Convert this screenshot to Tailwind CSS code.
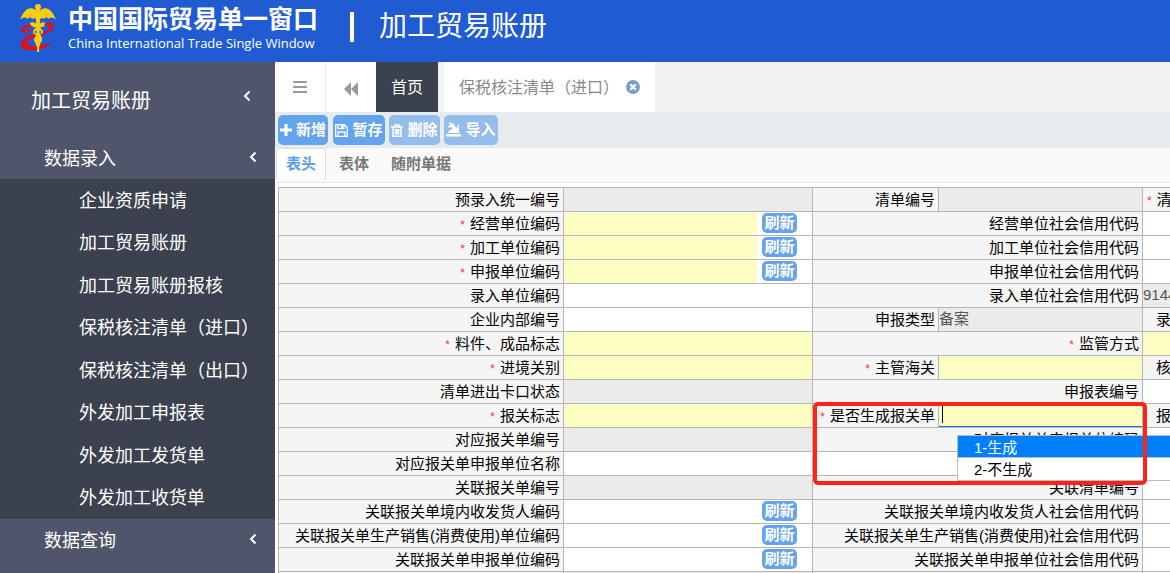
<!DOCTYPE html>
<html lang="zh-CN">
<head>
<meta charset="utf-8">
<meta name="viewport" content="width=device-width, initial-scale=1">
<title>加工贸易账册</title>
<script src="https://cdn.jsdelivr.net/npm/@tailwindcss/browser@4"></script>
</head>
<body class="flex h-screen flex-col overflow-hidden bg-white font-['Liberation_Sans','Noto_Sans_CJK_SC',sans-serif] text-[15px]">

<header class="flex h-[62px] shrink-0 items-start bg-[#205bd2] text-white">
  <svg class="ml-[18px] mt-[2px] h-[52px] w-[40px] shrink-0" viewBox="0 0 40 52" aria-hidden="true">
    <path d="M15 22C6 22 1 27 4 30C7 32 13 30 16 28C10 29 6 29 7 27C9 25 12 25 16 25Z" fill="#e40d18"/>
    <path d="M17.500 8C12 4 6 7 2 18C5 15 8 15 9 17C11 15 13 15 14 17C15 16 17 16 18 17V22H22V17C23 16 25 16 26 17C27 15 29 15 31 17C32 15 35 15 38 18C34 7 28 4 22.500 8Z" fill="#f7cd12"/>
    <circle cx="20" cy="5" r="3" fill="#f7cd12"/>
    <path d="M18 7H22L21 50H19Z" fill="#f7cd12"/>
    <path d="M12 21C15 19 18 21 20 23C22 21 25 19 28 21C28 24 24 25 22 26C26 28 26 32 22 34C25 36 24 40 21.500 41C23 43 22 44 21 45H19C18 44 17 43 18.500 41C16 40 15 36 18 34C14 32 14 28 18 26C16 25 12 24 12 21Z" fill="#f7cd12"/>
    <path d="M17 30H18.500M21.500 30H23M17.500 38H18.500M21.500 38H22.500" stroke="#205bd2" stroke-width="2"/>
    <path d="M27 21C35 19 38 23 34 28C29 33 14 35 10 39C8 42 10 44 15 44C23 44 29 42 34 40C29 46 20 49 10 48C2 47 1 41 6 37C9 34 13 33 17 32L18 34L23 32C26 31 30 28 31 26C32 23 30 23 26 23Z" fill="#e40d18"/>
    <path d="M19 31H21.500L23 34C25 37 24 40 21.500 42L21 50H19.500L18.500 42C16 40 16 36 18 34Z" fill="#f7cd12"/>
  </svg>
  <div class="ml-[10px] mt-[4px] shrink-0">
    <div class="text-[25px] leading-[30px] font-bold">中国国际贸易单一窗口</div>
    <div class="font-['Open_Sans',sans-serif] text-[13px] leading-[18px]">China International Trade Single Window</div>
  </div>
  <div class="ml-[32px] mt-[12px] h-[30px] w-[4px] shrink-0 bg-white"></div>
  <h1 class="ml-[25px] mt-[7px] text-[28px] leading-[40px] whitespace-nowrap">加工贸易账册</h1>
</header>

<div class="flex min-h-0 flex-1">
  <nav class="w-[275px] shrink-0 overflow-hidden bg-[#4f566b] text-[18px] text-white">
    <a href="#" class="flex h-[76px] items-center justify-between pt-[2px] pl-[31px] pr-[24px] text-[20px]">加工贸易账册
      <svg class="mb-[11px] h-[12px] w-[8px]" viewBox="0 0 8 12" fill="none" stroke="currentColor" stroke-width="2"><path d="M6.500 1.500L2 6L6.500 10.500"/></svg></a>
    <a href="#" class="flex h-[41px] items-center justify-between pt-[2px] pl-[44px] pr-[18px]">数据录入
      <svg class="mb-[6px] h-[12px] w-[8px]" viewBox="0 0 8 12" fill="none" stroke="currentColor" stroke-width="2"><path d="M6.500 1.500L2 6L6.500 10.500"/></svg></a>
    <ul class="flex h-[340px] flex-col bg-[#3b414e] [&>li]:flex [&>li]:flex-1 [&>li]:items-center [&>li]:pt-[2px] [&>li]:pl-[79px] [&>li]:whitespace-nowrap">
      <li><a href="#">企业资质申请</a></li>
      <li><a href="#">加工贸易账册</a></li>
      <li><a href="#">加工贸易账册报核</a></li>
      <li><a href="#">保税核注清单（进口）</a></li>
      <li><a href="#">保税核注清单（出口）</a></li>
      <li><a href="#">外发加工申报表</a></li>
      <li><a href="#">外发加工发货单</a></li>
      <li><a href="#">外发加工收货单</a></li>
    </ul>
    <a href="#" class="flex h-[43px] items-center justify-between pt-[2px] pl-[44px] pr-[18px]">数据查询
      <svg class="mb-[6px] h-[12px] w-[8px]" viewBox="0 0 8 12" fill="none" stroke="currentColor" stroke-width="2"><path d="M6.500 1.500L2 6L6.500 10.500"/></svg></a>
  </nav>

  <main class="min-w-0 flex-1 overflow-hidden">
    <div class="flex h-[50px] bg-[#f0f2f4] text-[16px] text-[#888]">
      <button aria-label="菜单" class="flex w-[51px] items-center justify-center border-r border-[#f0f0f0] bg-white">
        <svg class="h-[12px] w-[14px]" viewBox="0 0 14 12" fill="#999"><path d="M0 0H14V2H0ZM0 5H14V7H0ZM0 10H14V12H0Z"/></svg></button>
      <button aria-label="向左" class="flex w-[50px] items-center justify-center bg-white">
        <svg class="mt-[3px] h-[14px] w-[16px]" viewBox="0 0 16 14" fill="#999"><path d="M8 0V14L1 7ZM15 0V14L8 7Z"/></svg></button>
      <button class="w-[62px] bg-[#3b414e] pt-[2px] text-white">首页</button>
      <div class="ml-[6px] flex w-[211px] items-center bg-white pl-[15px] whitespace-nowrap">
        <a href="#" class="pt-[2px]">保税核注清单（进口）</a>
        <button aria-label="关闭" class="ml-[7px] flex size-[14px] shrink-0 items-center justify-center rounded-full bg-[#7d9fd0]">
          <svg class="size-[6px]" viewBox="0 0 6 6" stroke="#fff" stroke-width="2"><path d="M0 0L6 6M6 0L0 6"/></svg></button>
      </div>
    </div>

    <div class="flex h-[36px] items-start bg-[#e7ebee] pl-[3px] pt-[3px] text-[15px] font-bold text-white [&>button]:flex [&>button]:h-[30px] [&>button]:items-center [&>button]:justify-center [&>button]:gap-[4px] [&>button]:rounded-[5px] [&>button]:whitespace-nowrap">
      <button class="w-[50px] bg-[#64a3ed]"><svg class="size-[12px] shrink-0" viewBox="0 0 12 12" fill="#fff"><path d="M4.500 0H7.500V4.500H12V7.500H7.500V12H4.500V7.500H0V4.500H4.500Z"/></svg>新增</button>
      <button class="ml-[5px] w-[52px] bg-[#64a3ed]"><svg class="size-[13px] shrink-0" viewBox="0 0 13 13" fill="none" stroke="#fff" stroke-width="1.300"><path d="M.7.700H9.500L12.300 3.500V12.300H.7ZM3 .7V4.500H9V.7M3 12V8H10V12"/><path d="M7 1V4" stroke-width="2"/></svg>暂存</button>
      <button class="ml-[4px] w-[51px] bg-[#94bdeb]"><svg class="h-[13px] w-[12px] shrink-0" viewBox="0 0 12 13" fill="none" stroke="#fff" stroke-width="1.500"><path d="M0 3H12M4 3V1H8V3M2 3V12.200H10V3M4.500 5V10.500M6 5V10.500M7.600 5V10.500"/></svg>删除</button>
      <button class="ml-[4px] w-[54px] bg-[#94bdeb]"><svg class="mb-[2px] h-[15px] w-[15px] shrink-0" viewBox="0 0 15 15" fill="#fff"><path d="M0 12H15V14.500H0ZM2 11C3 8 5 7 7 7L5 5L3 6L2 4L4 3L3 1L5 0L6 2L8 1L8 3L11 6L13 1V10L14 11Z"/></svg>导入</button>
    </div>

    <div class="flex h-[35px] items-start border-b border-[#e7e9ea] bg-[#fafafa] pl-[1px] font-bold text-[#777]" role="tablist">
      <button role="tab" aria-selected="true" class="h-[31px] w-[50px] rounded-t-[4px] border border-b-0 border-[#ddd] bg-white text-[#5c9de9]">表头</button>
      <button role="tab" class="ml-[13px] h-[31px] pt-px">表体</button>
      <button role="tab" class="ml-[22px] h-[31px] pt-px">随附单据</button>
    </div>

    <form class="pl-[3px] pt-[4px]">
      <table class="w-[calc(100%+12px)] table-fixed border-collapse text-black [&_td]:border [&_td]:border-[#b5b5b5] [&_td]:p-0 [&_th]:border [&_th]:border-[#b5b5b5] [&_th]:bg-[#f5f5f5] [&_th]:p-0 [&_th]:pr-[3px] [&_th]:text-right [&_th]:font-normal [&_th]:whitespace-nowrap [&_tr]:h-[24px] [&_label]:block [&_label]:h-[23px] [&_label]:leading-[23px] [&_input]:block [&_input]:h-[22px] [&_input]:w-full [&_input]:text-[#555] [&_input]:outline-none [&_i]:mr-[5px] [&_i]:text-[12px] [&_i]:text-[#f33] [&_i]:not-italic [&_td>div>button]:ml-[5px] [&_td>div>button]:h-[20px] [&_td>div>button]:w-[35px] [&_td>div>button]:shrink-0 [&_td>div>button]:rounded-[5px] [&_td>div>button]:bg-[#64a3ed] [&_td>div>button]:text-[15px] [&_td>div>button]:leading-[20px] [&_td>div>button]:font-bold [&_td>div>button]:text-white">
        <colgroup><col class="w-[285px]"><col class="w-[249px]"><col class="w-[126px]"><col class="w-[204px]"><col></colgroup>
        <tbody>
        <tr><th><label for="a1">预录入统一编号</label></th><td class="bg-[#ebebeb]"><input id="a1" readonly></td><th><label for="b1">清单编号</label></th><td class="bg-[#ebebeb]"><input id="b1" readonly></td><th><label class="pl-[4px] text-left"><i>*</i>清</label></th></tr>
        <tr><th><label for="a2"><i>*</i>经营单位编码</label></th><td><div class="flex h-[23px] items-start pt-px pr-[15px]"><input id="a2" class="bg-[#fbfec0]"><button type="button">刷新</button></div></td><th colspan="2"><label for="b2">经营单位社会信用代码</label></th><td><input id="b2"></td></tr>
        <tr><th><label for="a3"><i>*</i>加工单位编码</label></th><td><div class="flex h-[23px] items-start pt-px pr-[15px]"><input id="a3" class="bg-[#fbfec0]"><button type="button">刷新</button></div></td><th colspan="2"><label for="b3">加工单位社会信用代码</label></th><td><input id="b3"></td></tr>
        <tr><th><label for="a4"><i>*</i>申报单位编码</label></th><td><div class="flex h-[23px] items-start pt-px pr-[15px]"><input id="a4" class="bg-[#fbfec0]"><button type="button">刷新</button></div></td><th colspan="2"><label for="b4">申报单位社会信用代码</label></th><td><input id="b4"></td></tr>
        <tr><th><label for="a5">录入单位编码</label></th><td><input id="a5"></td><th colspan="2"><label for="b5">录入单位社会信用代码</label></th><td class="bg-[#ebebeb]"><input id="b5" value="9144" readonly></td></tr>
        <tr><th><label for="a6">企业内部编号</label></th><td><input id="a6"></td><th><label for="b6">申报类型</label></th><td class="bg-[#ebebeb]"><input id="b6" value="备案" readonly></td><th><label class="pl-[13px] text-left">录</label></th></tr>
        <tr><th><label for="a7"><i>*</i>料件、成品标志</label></th><td class="bg-[#fbfec0]"><input id="a7"></td><th colspan="2"><label for="b7"><i>*</i>监管方式</label></th><td class="bg-[#fbfec0]"><input id="b7"></td></tr>
        <tr><th><label for="a8"><i>*</i>进境关别</label></th><td class="bg-[#fbfec0]"><input id="a8"></td><th><label for="b8"><i>*</i>主管海关</label></th><td class="bg-[#fbfec0]"><input id="b8"></td><th><label class="pl-[13px] text-left">核</label></th></tr>
        <tr><th><label for="a9">清单进出卡口状态</label></th><td class="bg-[#ebebeb]"><input id="a9" readonly></td><th colspan="2"><label for="b9">申报表编号</label></th><td><input id="b9"></td></tr>
        <tr><th><label for="a10"><i>*</i>报关标志</label></th><td class="bg-[#fbfec0]"><input id="a10"></td>
          <th><label for="b10"><i>*</i>是否生成报关单</label></th>
          <td class="bg-[#fbfec0]">
            <div class="relative h-[23px]">
              <input id="b10" role="combobox" aria-expanded="true" aria-controls="opts" class="h-[23px]! border-b border-[#0b7be8]">
              <span class="absolute left-[3px] top-[2px] h-[17px] w-px bg-black"></span>
              <ul id="opts" role="listbox" class="absolute left-[18px] top-[31px] z-10 w-[260px] border border-[#bbb] bg-white text-black [&>li]:h-[22px] [&>li]:pl-[16px] [&>li]:leading-[23px]">
                <li role="option" aria-selected="true" class="border-b border-[#bbb] bg-[#0080ff] text-white">1-生成</li>
                <li role="option" aria-selected="false">2-不生成</li>
              </ul>
              <div class="pointer-events-none absolute -left-[126px] -top-[2px] z-20 h-[83px] w-[334px] rounded-[5px] border-4 border-[#ff2317]"></div>
            </div>
          </td><th><label class="pl-[13px] text-left">报</label></th></tr>
        <tr><th><label for="a11">对应报关单编号</label></th><td class="bg-[#ebebeb]"><input id="a11" readonly></td><th colspan="2"><label for="b11">对应报关单申报单位编码</label></th><td><input id="b11"></td></tr>
        <tr><th><label for="a12">对应报关单申报单位名称</label></th><td><input id="a12"></td><td colspan="3"></td></tr>
        <tr><th><label for="a13">关联报关单编号</label></th><td class="bg-[#ebebeb]"><input id="a13" readonly></td><th colspan="2"><label for="b13">关联清单编号</label></th><td><input id="b13"></td></tr>
        <tr><th><label for="a14">关联报关单境内收发货人编码</label></th><td><div class="flex h-[23px] items-start pt-px pr-[15px]"><input id="a14"><button type="button">刷新</button></div></td><th colspan="2"><label for="b14">关联报关单境内收发货人社会信用代码</label></th><td><input id="b14"></td></tr>
        <tr><th><label for="a15">关联报关单生产销售(消费使用)单位编码</label></th><td><div class="flex h-[23px] items-start pt-px pr-[15px]"><input id="a15"><button type="button">刷新</button></div></td><th colspan="2"><label for="b15">关联报关单生产销售(消费使用)社会信用代码</label></th><td><input id="b15"></td></tr>
        <tr><th><label for="a16">关联报关单申报单位编码</label></th><td><div class="flex h-[23px] items-start pt-px pr-[15px]"><input id="a16"><button type="button">刷新</button></div></td><th colspan="2"><label for="b16">关联报关单申报单位社会信用代码</label></th><td><input id="b16"></td></tr>
        <tr><th></th><td class="bg-[#ebebeb]"></td><th colspan="2"></th><td></td></tr>
        </tbody>
      </table>
    </form>
  </main>
</div>
</body>
</html>
